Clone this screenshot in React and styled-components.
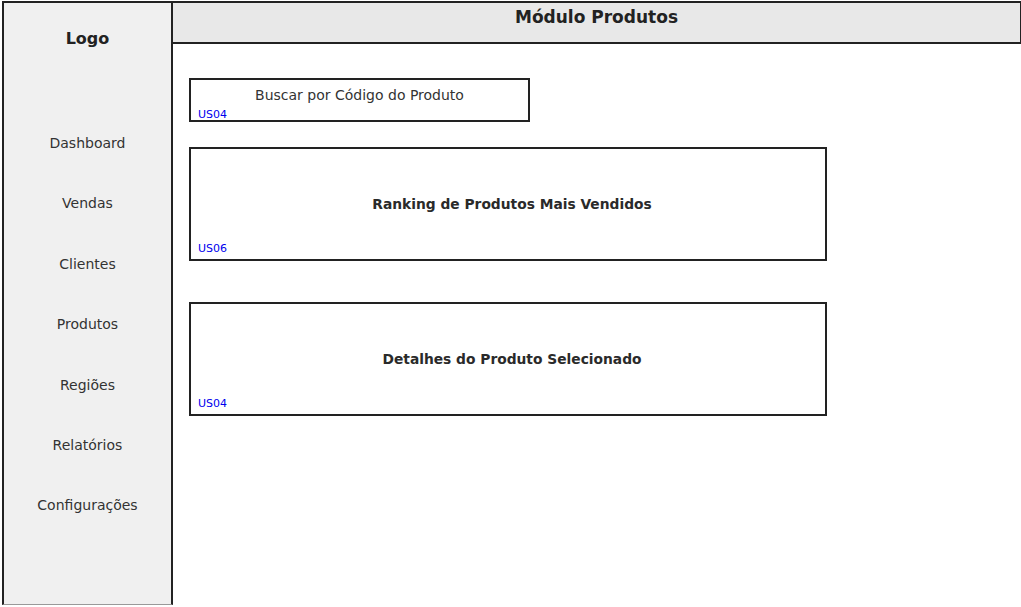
import React from 'react';
import styled, { createGlobalStyle } from 'styled-components';

const GlobalStyle = createGlobalStyle`
  body {
    margin: 0;
    background: #ffffff;
    font-family: 'DejaVu Sans', 'Liberation Sans', sans-serif;
  }
`;

const Page = styled.div`
  display: flex;
  width: 1021px;
  height: 607px;
  padding: 1px 0 0 2px;
  box-sizing: border-box;
  overflow: hidden;
  background: #ffffff;
`;

const Sidebar = styled.aside`
  width: 171px;
  height: 604px;
  flex-shrink: 0;
  box-sizing: border-box;
  background: #f0f0f0;
  border: 2px solid #222;
  border-bottom: 1px solid #999;
  display: flex;
  flex-direction: column;
  align-items: center;
`;

const Logo = styled.div`
  margin-top: 26px;
  font-size: 16px;
  line-height: 20px;
  font-weight: 700;
  color: #222;
`;

const Nav = styled.nav`
  margin-top: 64px;
  display: flex;
  flex-direction: column;
  align-items: center;
`;

const NavItem = styled.div`
  height: 60.4px;
  line-height: 60px;
  font-size: 14px;
  color: #333;
`;

const Main = styled.main`
  flex: 1;
  display: flex;
  flex-direction: column;
`;

const Header = styled.header`
  height: 43px;
  box-sizing: border-box;
  background: #e8e8e8;
  border-top: 2px solid #222;
  border-bottom: 2px solid #222;
  border-right: 1px solid #222;
  text-align: center;
  padding-top: 4px;
`;

const Title = styled.h1`
  margin: 0;
  font-size: 17px;
  line-height: 20px;
  font-weight: 700;
  color: #222;
`;

const Content = styled.section`
  padding: 34px 0 0 16px;
  display: flex;
  flex-direction: column;
  align-items: flex-start;
`;

const SearchBox = styled.div`
  width: 341px;
  height: 44px;
  box-sizing: border-box;
  border: 2px solid #222;
  background: #fff;
  display: flex;
  flex-direction: column;
`;

const SearchText = styled.div`
  padding-top: 7px;
  text-align: center;
  font-size: 14px;
  line-height: 17px;
  color: #333;
`;

const Panel = styled.div`
  width: 638px;
  height: 114px;
  margin-top: ${(p) => p.$gap}px;
  box-sizing: border-box;
  border: 2px solid #222;
  background: #fff;
  display: flex;
  flex-direction: column;
`;

const PanelTitle = styled.div`
  flex: 1;
  display: flex;
  align-items: center;
  justify-content: center;
  padding: 17px 0 0 8px;
  font-size: 13.8px;
  font-weight: 700;
  color: #2a2a2a;
`;

const Tag = styled.div`
  padding: ${(p) => (p.$top ? '4px' : '0')} 0 ${(p) => (p.$top ? '0' : '4px')} 7px;
  font-size: 11px;
  line-height: 13px;
  color: #0000ee;
`;

const navItems = ['Dashboard', 'Vendas', 'Clientes', 'Produtos', 'Regiões', 'Relatórios', 'Configurações'];

export default function App() {
  return (
    <>
      <GlobalStyle />
      <Page>
        <Sidebar>
          <Logo>Logo</Logo>
          <Nav>
            {navItems.map((n) => (
              <NavItem key={n}>{n}</NavItem>
            ))}
          </Nav>
        </Sidebar>
        <Main>
          <Header>
            <Title>Módulo Produtos</Title>
          </Header>
          <Content>
            <SearchBox>
              <SearchText>Buscar por Código do Produto</SearchText>
              <Tag $top>US04</Tag>
            </SearchBox>
            <Panel $gap={25}>
              <PanelTitle>Ranking de Produtos Mais Vendidos</PanelTitle>
              <Tag>US06</Tag>
            </Panel>
            <Panel $gap={41}>
              <PanelTitle>Detalhes do Produto Selecionado</PanelTitle>
              <Tag>US04</Tag>
            </Panel>
          </Content>
        </Main>
      </Page>
    </>
  );
}
